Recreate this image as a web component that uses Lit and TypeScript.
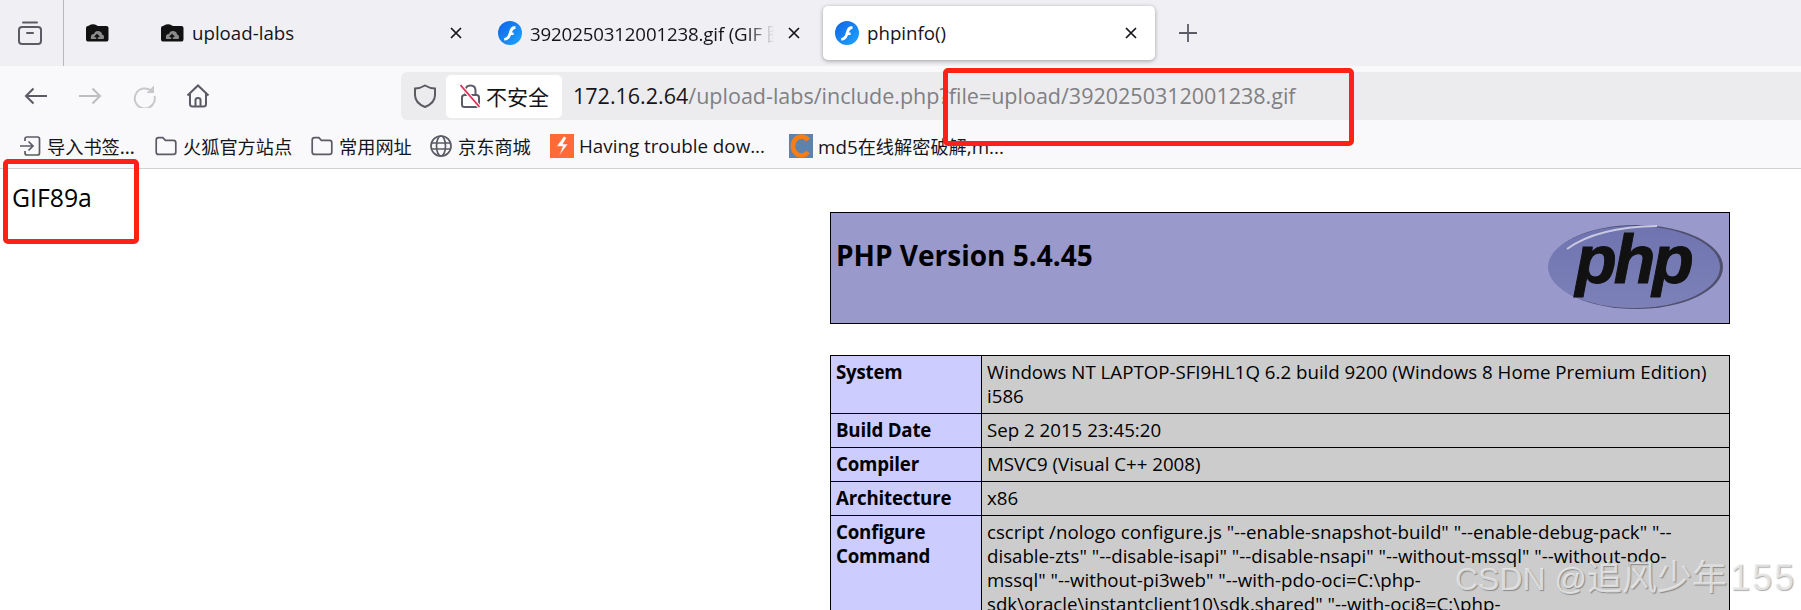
import { LitElement, html, css, svg } from "lit";
import { customElement } from "lit/decorators.js";

const folderFav = svg`<svg class="fav-folder" viewBox="0 0 24 18"><path d="M1 4 Q1 2 3 2 L6 .6 Q8 0 10 .6 L13 2 L21.5 2 Q23.5 2 23.5 4 V15 Q23.5 17.6 21 17.6 H3.5 Q1 17.6 1 15Z" fill="#111"/><path d="M6 15 Q5 10 9 10 Q10 6.5 13.5 7 Q17 7.5 17 10.5 Q20 11 18.6 15Z" fill="#8a8a8a"/><path d="M12 15.5 V11.5 M9.8 13 L12 10.8 L14.2 13" stroke="#111" stroke-width="1.6" fill="none"/></svg>`;

const flashFav = svg`<svg class="fav-flash" viewBox="0 0 24 24"><defs><linearGradient id="fl" x1="0" y1="0" x2="1" y2="1"><stop offset="0" stop-color="#0f62e6"/><stop offset="1" stop-color="#1fa6ff"/></linearGradient></defs><circle cx="12" cy="12" r="12" fill="url(#fl)"/><path d="M17.5 5.2 C13.5 5 12.4 7 11.3 10.2 C10.3 13.4 9.6 16.6 6.2 17 L6.2 19.6 C10.6 19.6 12 16.8 13 14 L15.6 14 L15.6 11.6 L13.9 11.6 C14.5 9.6 15.2 8 17.5 7.9Z" fill="#fff"/></svg>`;

const folderIcon = svg`<svg class="bm-ico" viewBox="0 0 22 22"><path d="M1.2 5 Q1.2 2.6 3.6 2.6 H7.8 L10.4 5.4 H18.4 Q20.8 5.4 20.8 7.8 V17 Q20.8 19.4 18.4 19.4 H3.6 Q1.2 19.4 1.2 17Z" fill="none" stroke="#5b5b66" stroke-width="1.7"/></svg>`;

const closeX = svg`<svg class="close" viewBox="0 0 12 12"><path d="M1 1 L11 11 M11 1 L1 11" stroke="#15141a" stroke-width="1.7"/></svg>`;

const rows: [string, unknown][] = [
  ["System", html`Windows NT LAPTOP-SFI9HL1Q 6.2 build 9200 (Windows 8 Home Premium Edition)<br />i586`],
  ["Build Date", "Sep 2 2015 23:45:20"],
  ["Compiler", "MSVC9 (Visual C++ 2008)"],
  ["Architecture", "x86"],
  [
    "Configure Command",
    html`cscript /nologo configure.js "--enable-snapshot-build" "--enable-debug-pack" "--<br />disable-zts" "--disable-isapi" "--disable-nsapi" "--without-mssql" "--without-pdo-<br />mssql" "--without-pi3web" "--with-pdo-oci=C:\\php-<br />sdk\\oracle\\instantclient10\\sdk.shared" "--with-oci8=C:\\php-<br />sdk\\oracle\\instantclient10\\sdk.shared"`,
  ],
];

@customElement("app-root")
export class AppRoot extends LitElement {
  static styles = css`
    :host {
      display: block;
      position: relative;
      width: 1801px;
      height: 610px;
      overflow: hidden;
      background: #fff;
      font-family: "Open Sans", "Noto Sans CJK SC", sans-serif;
      color: #15141a;
    }
    .tabstrip {
      display: flex;
      align-items: center;
      height: 66px;
      background: #f0f0f4;
    }
    .side {
      width: 63px;
      height: 66px;
      border-right: 1px solid #b9b9c0;
      display: flex;
      align-items: center;
      justify-content: center;
      flex: none;
    }
    .side svg { width: 24px; height: 24px; margin-left: -3px; }
    .pinned {
      width: 84px;
      flex: none;
      display: flex;
      padding-left: 21px;
      box-sizing: border-box;
    }
    .tabs { display: flex; gap: 6px; align-items: center; }
    .tab {
      width: 332px;
      height: 54px;
      box-sizing: border-box;
      padding: 0 18px 0 12px;
      display: flex;
      align-items: center;
      border-radius: 5px;
      font-size: 18.7px;
    }
    .tab.active {
      background: #fff;
      box-shadow: 0 1px 4px rgba(0, 0, 0, 0.35);
      margin-left: -1px;
    }
    .label {
      flex: 1;
      margin-left: 8px;
      margin-top: -1px;
      white-space: nowrap;
      overflow: hidden;
      min-width: 0;
    }
    .label.fade {
      letter-spacing: -0.15px;
      -webkit-mask-image: linear-gradient(to right, #000 86%, transparent 97%);
      mask-image: linear-gradient(to right, #000 86%, transparent 97%);
    }
    .fav-folder { width: 24px; height: 18px; flex: none; }
    .fav-flash { width: 24px; height: 24px; flex: none; }
    .close { width: 12px; height: 12px; flex: none; margin-left: 6px; }
    .plus { width: 20px; height: 20px; margin-left: 23px; flex: none; }
    .toolbar {
      display: flex;
      align-items: center;
      height: 48px;
      padding: 6px 0 0 9px;
      background: #f9f9fb;
    }
    .btn {
      width: 54px;
      flex: none;
      display: flex;
      justify-content: center;
      align-items: center;
    }
    .btn svg { width: 24px; height: 24px; }
    .urlbar {
      margin-left: 176px;
      flex: 1;
      height: 48px;
      background: #ececee;
      border-radius: 6px 0 0 6px;
      display: flex;
      align-items: center;
      padding-left: 13px;
    }
    .shield { width: 22px; height: 24px; flex: none; }
    .secure {
      margin-left: 10px;
      width: 116px;
      height: 43px;
      box-sizing: border-box;
      background: #fff;
      border-radius: 5px;
      display: flex;
      align-items: center;
      padding-left: 14px;
      gap: 6px;
      font-family: "Noto Sans CJK SC", sans-serif;
      font-size: 21px;
      flex: none;
    }
    .lock { width: 20px; height: 24px; flex: none; }
    .url {
      margin-left: 11px;
      margin-top: -2px;
      font-size: 21.5px;
      white-space: nowrap;
      color: #7f7f84;
    }
    .url b { font-weight: 400; color: #15141a; }
    .bookmarks {
      display: flex;
      align-items: center;
      height: 48px;
      background: #f9f9fb;
      border-bottom: 1px solid #cfcfd4;
      padding-left: 19px;
      font-size: 18.8px;
    }
    .bm { display: flex; align-items: center; gap: 6px; white-space: nowrap; padding-top: 4px; }
    .bm-ico { width: 22px; height: 22px; flex: none; }
    .bm-big { width: 24px; height: 24px; flex: none; margin-right: -1px; }
    .cjk { font-family: "Noto Sans CJK SC", sans-serif; font-size: 18.2px; }
    .bm1 { width: 136px; }
    .bm2 { width: 156px; }
    .bm3 { width: 119px; }
    .bm4 { width: 120px; }
    .bm5 { width: 239px; }
    .content { padding-top: 15px; }
    .gif {
      margin-left: 12px;
      height: 28px;
      line-height: 26px;
      font-size: 24.8px;
      color: #000;
    }
    .php {
      margin-left: 830px;
      width: 900px;
      color: #000;
    }
    table {
      border-collapse: collapse;
      width: 900px;
      table-layout: fixed;
      font-size: 18.7px;
      line-height: 24px;
    }
    .head {
      height: 112px;
      box-sizing: border-box;
      background: #9999cc;
      border: 1px solid #000;
      display: flex;
      justify-content: space-between;
      padding: 26px 4px 0 5px;
      margin-bottom: 31px;
    }
    .head h1 {
      margin: 0;
      font-size: 28px;
      line-height: 32px;
      font-weight: 700;
    }
    .logo { width: 178px; height: 88px; margin-top: -16px; flex: none; }
    td {
      border: 1px solid #000;
      padding: 4px 6px 5px 5px;
      vertical-align: top;
      background: #cccccc;
      white-space: nowrap;
      overflow: hidden;
    }
    td.e {
      background: #ccccff;
      font-weight: 700;
      width: 139px;
      white-space: normal;
      letter-spacing: -0.2px;
    }
    .redbox {
      position: absolute;
      border: 5px solid #ff2116;
      border-radius: 5px;
      box-sizing: border-box;
    }
    .r1 { left: 943px; top: 68px; width: 411px; height: 78px; }
    .r2 { left: 3px; top: 159px; width: 136px; height: 85px; }
    .mark {
      position: absolute;
      left: 1455px;
      top: 558px;
      font-family: "Liberation Sans", "Noto Sans CJK SC", sans-serif;
      font-size: 32px;
      line-height: 40px;
      white-space: nowrap;
      color: rgba(238, 238, 238, 0.78);
      text-shadow: 1px 1px 1px rgba(0, 0, 0, 0.32);
    }
    .m-cjk { font-size: 35px; }
    .m-num { font-size: 36px; letter-spacing: 2px; margin-left: 3px; }
  `;

  render() {
    return html`
      <div class="tabstrip">
        <div class="side">
          <svg viewBox="0 0 24 24" fill="none" stroke="#5b5b66" stroke-width="2"><path d="M5 1.5 H19" stroke-linecap="round"/><rect x="1" y="6" width="22" height="17" rx="3"/><path d="M9 12 H15" stroke-linecap="round"/></svg>
        </div>
        <div class="pinned">${folderFav}</div>
        <div class="tabs">
          <div class="tab">${folderFav}<span class="label">upload-labs</span>${closeX}</div>
          <div class="tab">${flashFav}<span class="label fade">3920250312001238.gif (GIF 图像，500×500 像素)</span>${closeX}</div>
          <div class="tab active">${flashFav}<span class="label">phpinfo()</span>${closeX}</div>
        </div>
        <svg class="plus" viewBox="0 0 20 20"><path d="M10 1 V19 M1 10 H19" stroke="#5b5b66" stroke-width="1.8"/></svg>
      </div>
      <div class="toolbar">
        <div class="btn"><svg viewBox="0 0 24 24" fill="none" stroke="#5b5b66" stroke-width="2"><path d="M23 12 H2 M9.5 4.5 L2 12 L9.5 19.5"/></svg></div>
        <div class="btn"><svg viewBox="0 0 24 24" fill="none" stroke="#bdbdc2" stroke-width="2"><path d="M1 12 H22 M14.5 4.5 L22 12 L14.5 19.5"/></svg></div>
        <div class="btn"><svg viewBox="0 0 24 24" fill="none" stroke="#c8c8cc" stroke-width="2"><path d="M20 7.5 A10 10 0 1 0 22.5 12"/><path d="M22 1.5 V9 H14.5Z" fill="#c8c8cc" stroke="none"/></svg></div>
        <div class="btn"><svg viewBox="0 0 24 24" fill="none" stroke="#5b5b66" stroke-width="2"><path d="M1.5 11.5 L12 1.5 L22.5 11.5 M4 9.5 V20 Q4 22.5 6.5 22.5 H17.5 Q20 22.5 20 20 V9.5 M9.5 22.5 V16 Q9.5 14 12 14 Q14.5 14 14.5 16 V22.5"/></svg></div>
        <div class="urlbar">
          <svg class="shield" viewBox="0 0 22 24" fill="none" stroke="#5b5b66" stroke-width="2"><path d="M11 1.5 Q16 4.5 21 4.5 V11 Q21 19 11 23 Q1 19 1 11 V4.5 Q6 4.5 11 1.5Z"/></svg>
          <div class="secure">
            <svg class="lock" viewBox="0 0 20 24" fill="none"><path d="M5.5 11 V6.5 Q5.5 1.5 10.5 1.5 Q15.5 1.5 15.5 6.5 V11" stroke="#5b5b66" stroke-width="2"/><rect x="2" y="11" width="17" height="12" rx="2.5" stroke="#5b5b66" stroke-width="2"/><path d="M0.5 1 L20 23.5" stroke="#f9f9fb" stroke-width="4"/><path d="M0.5 1 L19.5 23" stroke="#e22850" stroke-width="1.6"/></svg>
            <span>不安全</span>
          </div>
          <div class="url"><b>172.16.2.64</b>/upload-labs/include.php?file=upload/3920250312001238.gif</div>
        </div>
      </div>
      <div class="bookmarks">
        <div class="bm bm1"><svg class="bm-ico" viewBox="0 0 22 22" fill="none" stroke="#5b5b66" stroke-width="1.7"><path d="M6 6 V4 Q6 2 8 2 H18.5 Q20.5 2 20.5 4 V18 Q20.5 20 18.5 20 H8 Q6 20 6 18 V16 M1 11 H14 M9.5 6.5 L14 11 L9.5 15.5"/></svg><span class="cjk">导入书签...</span></div>
        <div class="bm bm2">${folderIcon}<span class="cjk">火狐官方站点</span></div>
        <div class="bm bm3">${folderIcon}<span class="cjk">常用网址</span></div>
        <div class="bm bm4"><svg class="bm-ico" viewBox="0 0 22 22" fill="none" stroke="#5b5b66" stroke-width="1.7"><circle cx="11" cy="11" r="10"/><ellipse cx="11" cy="11" rx="4.5" ry="10"/><path d="M1.5 8 H20.5 M1.5 14 H20.5"/></svg><span class="cjk">京东商城</span></div>
        <div class="bm bm5"><svg class="bm-big" viewBox="0 0 24 24"><rect width="24" height="24" fill="#ff6a36"/><path d="M14 2 L6.5 12.5 H12.5 L9 22 L18 10 H13 L16.5 4Z" fill="#fff" stroke="#ff6a36" stroke-width=".6"/></svg><span>Having trouble dow...</span></div>
        <div class="bm"><svg class="bm-big" viewBox="0 0 24 24"><rect width="24" height="24" fill="#5c82ad"/><path d="M19 6 A8.5 9.5 0 1 0 19 18" fill="none" stroke="#fa7d12" stroke-width="4.6"/></svg><span>md5<span class="cjk">在线解密破解</span>,m...</span></div>
      </div>
      <div class="content">
        <div class="gif">GIF89a</div>
        <div class="php">
          <div class="head">
            <h1>PHP Version 5.4.45</h1>
            <svg class="logo" viewBox="0 0 178 88">
              <defs>
                <linearGradient id="lg" x1="0" y1="0" x2="0" y2="1"><stop offset="0" stop-color="#6f74b0"/><stop offset="1" stop-color="#7d81b8"/></linearGradient>
              </defs>
              <ellipse cx="89" cy="44" rx="87" ry="42" fill="#4f4f6e"/>
              <ellipse cx="87" cy="44" rx="86" ry="41" fill="url(#lg)"/>
              <path d="M20 26 Q50 4 110 3" fill="none" stroke="#c9c9e0" stroke-width="2"/>
              <text x="86" y="60" text-anchor="middle" font-family="Liberation Sans" font-weight="700" font-style="italic" font-size="68" letter-spacing="-3" stroke="#111" stroke-width="1" fill="#111">php</text>
            </svg>
          </div>
          <table>
            ${rows.map(([k, v]) => html`<tr><td class="e">${k}</td><td>${v}</td></tr>`)}
          </table>
        </div>
      </div>
      <div class="redbox r1"></div>
      <div class="redbox r2"></div>
      <div class="mark">CSDN @<span class="m-cjk">追风少年</span><span class="m-num">155</span></div>
    `;
  }
}
